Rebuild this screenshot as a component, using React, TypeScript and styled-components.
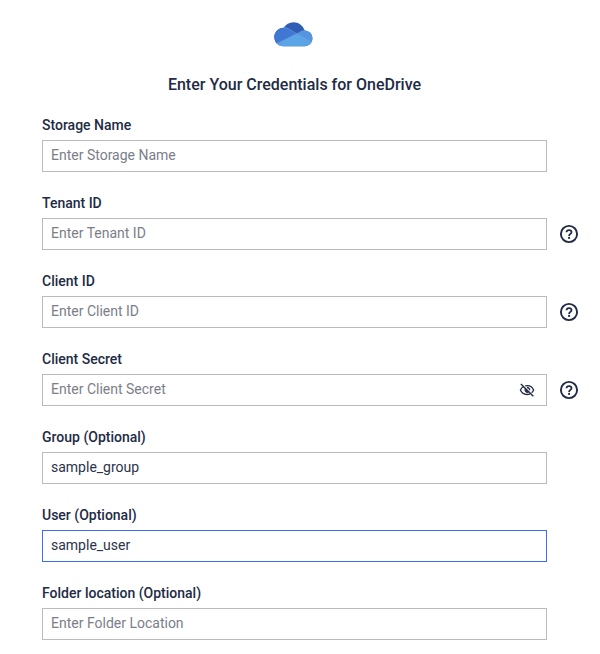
import React from "react";
import styled, { createGlobalStyle } from "styled-components";

const GlobalStyle = createGlobalStyle`
  * { box-sizing: border-box; }
  body { margin: 0; background: #fff; font-family: Roboto, sans-serif; color: #222b45; }
`;

const Page = styled.main`
  display: flex;
  flex-direction: column;
  height: 654px;
  overflow: hidden;
  padding: 22px 11px 0 42px;
`;

const Header = styled.header`
  display: flex;
  flex-direction: column;
  align-items: center;
  width: 505px;
`;

const Logo = styled.svg`
  display: block;
  width: 39px;
  height: 25px;
  margin-left: -2px;
`;

const Title = styled.h1`
  margin: 26px 0 0;
  font-size: 16px;
  line-height: 24px;
  font-weight: 500;
  white-space: nowrap;
`;

const Form = styled.form`
  display: flex;
  flex-direction: column;
  gap: 21px;
  margin-top: 18px;
`;

const Field = styled.div`
  display: flex;
  flex-direction: column;
  gap: 5px;
`;

const Label = styled.label`
  font-size: 14px;
  line-height: 20px;
  font-weight: 500;
`;

const InputRow = styled.div`
  display: flex;
  align-items: center;
  gap: 11px;
`;

const InputBox = styled.div<{ $active?: boolean }>`
  display: flex;
  align-items: center;
  width: 505px;
  height: 32px;
  padding: 0 11px 0 8px;
  border: 1px solid ${(p) => (p.$active ? "#3d6bf2" : "#babbbd")};
  background: #fff;
`;

const Input = styled.input`
  flex: 1;
  min-width: 0;
  height: 18px;
  margin: 0 0 2px;
  padding: 0;
  border: 0;
  outline: 0;
  background: transparent;
  font: 400 14px/18px Roboto, sans-serif;
  color: #2b334a;
  &::placeholder { color: #7b7e89; opacity: 1; }
`;

const IconButton = styled.button`
  display: flex;
  padding: 0;
  border: 0;
  background: transparent;
  color: #222b45;
`;

const OneDriveLogo = () => (
  <Logo viewBox="0 0 39 25" role="img" aria-label="OneDrive">
    <defs>
      <clipPath id="cloud">
        <path d="M9.4 24.2C4.2 24.2.3 20.1.3 15 .3 9.9 4.4 5.8 9.7 5.7 11.8 2.3 15.3.2 19.4.2c5.2 0 9.7 3.3 11.2 8.2 4.5.1 7.8 3.5 7.8 7.9 0 4.5-3.4 7.9-7.8 7.9Z" />
      </clipPath>
    </defs>
    <g clipPath="url(#cloud)">
      <path fill="#315eb4" d="M0 0h39v25H0Z" />
      <path fill="#3f77d2" d="M0 5h9c2.4 0 4.3.6 6.1 1.8l7.4 4.9L2.5 21.8 0 25Z" />
      <path fill="#5794df" d="m22.4 11.7 4.4-2.5c1.5-.7 2.8-1 4.6-1H39v12Z" />
      <path fill="#5ba4e6" d="M1 22.4 22.5 11.7 38 19.8V25H1Z" />
      <path fill="none" stroke="#78a8e4" strokeWidth=".45" d="m10 5.7 4.7 1 7.8 5 14.8 7.7M22.5 11.7 2.5 21.8" />
    </g>
  </Logo>
);

const HelpIcon = () => (
  <svg width="22" height="22" viewBox="0 0 22 22" fill="none" stroke="currentColor">
    <circle cx="11" cy="11" r="8.1" strokeWidth="1.9" />
    <path d="M8.5 9.2C8.6 7.8 9.6 7.1 11 7.1s2.5.8 2.5 2.1c0 1.6-2.4 1.8-2.4 3.7" strokeWidth="1.8" />
    <circle cx="11.1" cy="14.9" r="1.1" fill="currentColor" stroke="none" />
  </svg>
);

const HiddenIcon = () => (
  <svg width="16" height="16" viewBox="0 0 16 16" fill="none" stroke="currentColor" strokeWidth="1.3">
    <path d="M4.7 4.5C3.2 5.2 2.1 6.5 1.4 8c1.2 2.8 3.7 4.5 6.6 4.5 1.1 0 2.1-.2 3-.6M6.2 3.8c4-.8 7.2 1.1 8.4 4.2-.4 1.1-1.1 2.1-2 2.8" />
    <path d="M8 5.5A2.7 2.7 0 0 1 10.7 8.2" />
    <path d="m1.9 1.9 12.4 12.4" strokeWidth="1.4" />
    <path d="M5.8 6.3a3.1 3.1 0 0 0 4.2 4.2Z" fill="currentColor" stroke="none" />
  </svg>
);

interface FieldData {
  id: string;
  label: string;
  value?: string;
  placeholder?: string;
  help?: boolean;
  secret?: boolean;
  active?: boolean;
}

const fields: FieldData[] = [
  { id: "storage", label: "Storage Name", placeholder: "Enter Storage Name" },
  { id: "tenant", label: "Tenant ID", placeholder: "Enter Tenant ID", help: true },
  { id: "client", label: "Client ID", placeholder: "Enter Client ID", help: true },
  { id: "secret", label: "Client Secret", placeholder: "Enter Client Secret", help: true, secret: true },
  { id: "group", label: "Group (Optional)", value: "sample_group" },
  { id: "user", label: "User (Optional)", value: "sample_user", active: true },
  { id: "folder", label: "Folder location (Optional)", placeholder: "Enter Folder Location" },
];

export default function App() {
  return (
    <>
      <GlobalStyle />
      <Page>
        <Header>
          <OneDriveLogo />
          <Title>Enter Your Credentials for OneDrive</Title>
        </Header>
        <Form>
          {fields.map((f) => (
            <Field key={f.id}>
              <Label htmlFor={f.id}>{f.label}</Label>
              <InputRow>
                <InputBox $active={f.active}>
                  <Input
                    id={f.id}
                    type={f.secret ? "password" : "text"}
                    placeholder={f.placeholder}
                    defaultValue={f.value}
                    spellCheck={false}
                  />
                  {f.secret && (
                    <IconButton type="button" aria-label="Show secret">
                      <HiddenIcon />
                    </IconButton>
                  )}
                </InputBox>
                {f.help && (
                  <IconButton type="button" aria-label={`Help for ${f.label}`}>
                    <HelpIcon />
                  </IconButton>
                )}
              </InputRow>
            </Field>
          ))}
        </Form>
      </Page>
    </>
  );
}
